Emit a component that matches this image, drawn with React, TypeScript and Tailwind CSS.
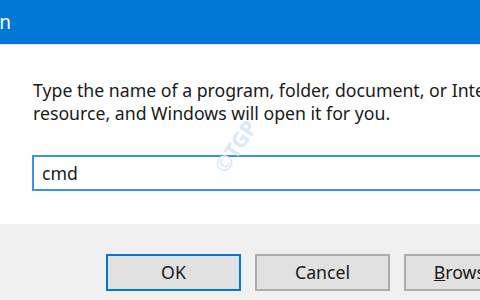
export default function App() {
  const font = { fontFamily: '"Noto Sans", "Open Sans", sans-serif' };
  return (
    <div
      className="relative w-[480px] h-[300px] overflow-hidden bg-white flex flex-col text-[#1a1a1a]"
      style={font}
    >
      {/* title bar, cut on the left */}
      <div className="h-[44px] shrink-0 bg-[#0078d7] flex items-center">
        <div className="w-[11px] flex justify-end text-white text-[19px] leading-none whitespace-nowrap">
          Run
        </div>
      </div>
      <div className="h-px bg-[#e3e3e3]" />

      {/* body */}
      <div className="flex-1 flex flex-col pl-[33px] pt-[34px]">
        <div className="flex">
          <div className="text-[17.7px] leading-[23px] whitespace-nowrap">
            <div>Type the name of a program, folder, document, or Internet</div>
            <div>resource, and Windows will open it for you.</div>
          </div>
        </div>
        <div className="mt-[30px] -ml-px h-[36px] w-[470px] border-2 border-[#3c92e0] flex items-center pl-[8px]">
          <span className="text-[17.7px]">cmd</span>
        </div>
      </div>

      {/* footer */}
      <div className="h-[76px] shrink-0 bg-[#f0f0f0] flex items-start gap-[14px] pl-[106px] pt-[30px]">
        <button className="w-[135px] h-[37px] shrink-0 border-2 border-[#0078d7] bg-[#e1e1e1] text-[17.7px]">
          OK
        </button>
        <button className="w-[135px] h-[37px] shrink-0 border-2 border-[#adadad] bg-[#e1e1e1] text-[17.7px]">
          Cancel
        </button>
        <button className="w-[135px] h-[37px] shrink-0 border-2 border-[#adadad] bg-[#e1e1e1] text-[17.7px]">
          <span className="underline">B</span>rowse...
        </button>
      </div>

      {/* watermark */}
      <div className="absolute left-[207px] top-[131px] -rotate-[56deg] text-[#dbe8f6] text-[21px] font-bold whitespace-nowrap pointer-events-none">
        ©TGP
      </div>
    </div>
  );
}
